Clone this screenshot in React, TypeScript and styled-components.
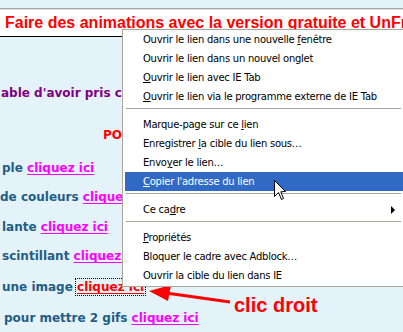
import React from "react";
import styled, { createGlobalStyle } from "styled-components";

const GlobalStyle = createGlobalStyle`
  html, body {
    margin: 0;
    padding: 0;
    background: #e4f2fa;
    overflow: hidden;
  }
`;

const Page = styled.div`
  width: 403px;
  height: 332px;
  position: relative;
  overflow: hidden;
  background: #e4f2fa;
`;

const TopStrip = styled.div`
  height: 8px;
  border-bottom: 1px solid #a8a8a8;
`;

const TitleBand = styled.div`
  height: 26px;
  border-top: 1px solid #dcdcdc;
  border-bottom: 1px solid #000;
  background: #fff;
  padding-left: 5px;
  white-space: nowrap;
  overflow: hidden;
  font: bold 16px "Liberation Sans", Arial, sans-serif;
  line-height: 25px;
  color: #ff0000;
`;

const Content = styled.div`
  padding-top: 48px;
  font: bold 12px "DejaVu Sans", Verdana, sans-serif;
  white-space: nowrap;
`;

const Intro = styled.div`
  height: 16px;
  line-height: 16px;
  padding-left: 1px;
  color: #800080;
`;

const Heading = styled.div`
  margin-top: 26px;
  height: 16px;
  line-height: 16px;
  padding-left: 103px;
  color: #ff0000;
`;

const Row = styled.div<{ $h: number; $pad?: number; $top?: number }>`
  height: ${(p) => p.$h}px;
  line-height: ${(p) => p.$h}px;
  margin-top: ${(p) => p.$top ?? 0}px;
  padding-left: ${(p) => p.$pad ?? 2}px;
  color: #1f5d84;
`;

const Link = styled.a<{ $red?: boolean }>`
  color: ${(p) => (p.$red ? "#ff0000" : "#ff00ff")};
  text-decoration: underline;
  text-underline-offset: 2px;
  ${(p) => (p.$red ? "outline: 1px dotted #000; outline-offset: 1px;" : "")}
`;

const Menu = styled.div`
  position: absolute;
  left: 122px;
  top: 29px;
  width: 279px;
  border: 1px solid #aca899;
  padding: 0 1px 1px 1px;
  background: #fff;
  font: 10px "DejaVu Sans", Tahoma, sans-serif;
  letter-spacing: -0.25px;
  color: #000;
`;

const Item = styled.div<{ $active?: boolean }>`
  position: relative;
  height: 19px;
  line-height: 19px;
  padding-left: 18px;
  margin-left: 1px;
  white-space: nowrap;
  background: ${(p) => (p.$active ? "#316ac5" : "transparent")};
  color: ${(p) => (p.$active ? "#fff" : "#000")};
`;

const Sep = styled.div`
  height: 9px;
  display: flex;
  align-items: flex-start;
  padding: 2px 2px 0 2px;
  box-sizing: border-box;
  &::after {
    content: "";
    flex: 1;
    height: 1px;
    border-bottom: 1px solid #fff;
    background: #aca899;
  }
`;

const Key = styled.span`
  text-decoration: underline;
`;

const SubArrow = styled.span`
  position: absolute;
  right: 8px;
  top: 6px;
  width: 0;
  height: 0;
  border-top: 4px solid transparent;
  border-bottom: 4px solid transparent;
  border-left: 4px solid #000;
`;

const Overlay = styled.svg`
  position: absolute;
  left: 0;
  top: 0;
  pointer-events: none;
`;

const Note = styled.div`
  position: absolute;
  left: 234px;
  top: 294px;
  font: bold 20px "Liberation Sans", Arial, sans-serif;
  color: #ff0000;
  white-space: nowrap;
`;

const Cursor = styled.svg`
  position: absolute;
  left: 274px;
  top: 180px;
`;

export default function App(): JSX.Element {
  return (
    <>
      <GlobalStyle />
      <Page>
        <TopStrip />
        <TitleBand>Faire des animations avec la version gratuite et UnFreez</TitleBand>
        <Content>
          <Intro>able d'avoir pris c</Intro>
          <Heading>PO</Heading>
          <Row $h={29} $top={11}>
            ple <Link>cliquez ici</Link>
          </Row>
          <Row $h={29} $pad={0}>
            de couleurs <Link>cliquez ici</Link>
          </Row>
          <Row $h={30}>
            lante <Link>cliquez ici</Link>
          </Row>
          <Row $h={29}>
            scintillant <Link>cliquez ici</Link>
          </Row>
          <Row $h={33}>
            une image <Link $red>cliquez ici</Link>
          </Row>
          <Row $h={29} $pad={4}>
            pour mettre 2 gifs <Link>cliquez ici</Link>
          </Row>
        </Content>

        <Overlay width="403" height="332" viewBox="0 0 403 332">
          <line x1="230" y1="302" x2="166" y2="293" stroke="#ff0000" strokeWidth="3" />
          <polygon points="149,291 171,285 168,301" fill="#ff0000" />
        </Overlay>
        <Note>clic droit</Note>

        <Menu>
          <Item>Ouvrir le lien dans une nouvelle <Key>f</Key>enêtre</Item>
          <Item>Ouvrir le lien dans un nouvel onglet<Key></Key></Item>
          <Item><Key>O</Key>uvrir le lien avec IE Tab</Item>
          <Item><Key>O</Key>uvrir le lien via le programme externe de IE Tab</Item>
          <Sep />
          <Item>Marque-page sur ce <Key>l</Key>ien</Item>
          <Item>Enregistrer <Key>l</Key>a cible du lien sous…</Item>
          <Item>Envo<Key>y</Key>er le lien…</Item>
          <Item $active><Key>C</Key>opier l'adresse du lien</Item>
          <Sep />
          <Item>Ce ca<Key>d</Key>re<SubArrow /></Item>
          <Sep />
          <Item><Key>P</Key>ropriétés</Item>
          <Item>Bloquer le cadre avec Adblock…</Item>
          <Item>Ouvrir la cible du lien dans IE</Item>
        </Menu>

        <Cursor width="13" height="21" viewBox="0 0 13 21">
          <path
            d="M0.5 0.5 L0.5 16.5 L4.5 12.5 L7.5 19.5 L9.5 18.5 L6.8 11.8 L11.5 11.5 Z"
            fill="#fff"
            stroke="#000"
            strokeWidth="1"
          />
        </Cursor>
      </Page>
    </>
  );
}
